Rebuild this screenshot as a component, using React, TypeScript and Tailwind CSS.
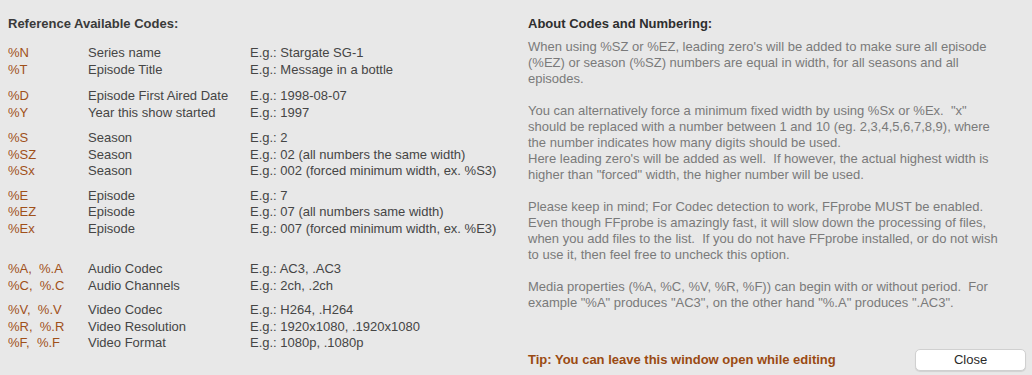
import React from 'react';

type Row = { code: string; label: string; example: string };

const groups: { gap: string; rows: Row[] }[] = [
    {
        gap: 'mt-0',
        rows: [
            { code: '%N', label: 'Series name', example: 'E.g.: Stargate SG-1' },
            { code: '%T', label: 'Episode Title', example: 'E.g.: Message in a bottle' },
        ],
    },
    {
        gap: 'mt-[10px]',
        rows: [
            { code: '%D', label: 'Episode First Aired Date', example: 'E.g.: 1998-08-07' },
            { code: '%Y', label: 'Year this show started', example: 'E.g.: 1997' },
        ],
    },
    {
        gap: 'mt-[9px]',
        rows: [
            { code: '%S', label: 'Season', example: 'E.g.: 2' },
            { code: '%SZ', label: 'Season', example: 'E.g.: 02 (all numbers the same width)' },
            { code: '%Sx', label: 'Season', example: 'E.g.: 002 (forced minimum width, ex. %S3)' },
        ],
    },
    {
        gap: 'mt-[8px]',
        rows: [
            { code: '%E', label: 'Episode', example: 'E.g.: 7' },
            { code: '%EZ', label: 'Episode', example: 'E.g.: 07 (all numbers same width)' },
            { code: '%Ex', label: 'Episode', example: 'E.g.: 007 (forced minimum width, ex. %E3)' },
        ],
    },
    {
        gap: 'mt-[24px]',
        rows: [
            { code: '%A,  %.A', label: 'Audio Codec', example: 'E.g.: AC3, .AC3' },
            { code: '%C,  %.C', label: 'Audio Channels', example: 'E.g.: 2ch, .2ch' },
        ],
    },
    {
        gap: 'mt-[8px]',
        rows: [
            { code: '%V,  %.V', label: 'Video Codec', example: 'E.g.: H264, .H264' },
            { code: '%R,  %.R', label: 'Video Resolution', example: 'E.g.: 1920x1080, .1920x1080' },
            { code: '%F,  %.F', label: 'Video Format', example: 'E.g.: 1080p, .1080p' },
        ],
    },
];

const App: React.FC = () => {
    return (
        <div className="flex h-[375px] w-full bg-[#e8e8e8] font-['Liberation_Sans',Arial,sans-serif] text-[13px]">
            {/* Left: codes table */}
            <div className="w-[528px] pl-2 pt-4">
                <h2 className="font-bold leading-4 text-[#3a3a3a]">Reference Available Codes:</h2>
                <div className="mt-[13px]">
                    {groups.map((g, gi) => (
                        <div key={gi} className={g.gap}>
                            {g.rows.map((r) => (
                                <div key={r.code} className="flex leading-[16.5px]">
                                    <span className="w-20 whitespace-pre text-[#a0501a]">{r.code}</span>
                                    <span className="w-[162px] text-[#454545]">{r.label}</span>
                                    <span className="whitespace-nowrap text-[#454545]">{r.example}</span>
                                </div>
                            ))}
                        </div>
                    ))}
                </div>
            </div>

            {/* Right: explanation */}
            <div className="flex flex-1 flex-col pr-[6px] pt-4">
                <h2 className="font-bold leading-4 text-[#2e2e2e]">About Codes and Numbering:</h2>
                <div className="mt-[7px] whitespace-nowrap leading-4 text-[#7a7a7a]">
                    <p>
                        When using %SZ or %EZ, leading zero's will be added to make sure all episode
                        <br />
                        (%EZ) or season (%SZ) numbers are equal in width, for all seasons and all
                        <br />
                        episodes.
                    </p>
                    <p className="mt-4 whitespace-pre">
                        {'You can alternatively force a minimum fixed width by using %Sx or %Ex.  "x"'}
                        <br />
                        should be replaced with a number between 1 and 10 (eg. 2,3,4,5,6,7,8,9), where
                        <br />
                        the number indicates how many digits should be used.
                        <br />
                        {'Here leading zero\'s will be added as well.  If however, the actual highest width is'}
                        <br />
                        higher than "forced" width, the higher number will be used.
                    </p>
                    <p className="mt-4 whitespace-pre">
                        Please keep in mind; For Codec detection to work, FFprobe MUST be enabled.
                        <br />
                        Even though FFprobe is amazingly fast, it will slow down the processing of files,
                        <br />
                        {'when you add files to the list.  If you do not have FFprobe installed, or do not wish'}
                        <br />
                        to use it, then feel free to uncheck this option.
                    </p>
                    <p className="mt-4 whitespace-pre">
                        {'Media properties (%A, %C, %V, %R, %F)) can begin with or without period.  For'}
                        <br />
                        example "%A" produces "AC3", on the other hand "%.A" produces ".AC3".
                    </p>
                </div>

                <div className="mt-auto mb-[4px] flex items-center justify-between">
                    <span className="font-bold text-[#9a4a12]">Tip: You can leave this window open while editing</span>
                    <button className="h-[22px] w-[111px] rounded-[5px] border border-[#d0d0d0] bg-white text-[13px] text-[#2a2a2a] shadow-[0_1px_1px_rgba(0,0,0,0.1)]">
                        Close
                    </button>
                </div>
            </div>
        </div>
    );
};

export default App;
